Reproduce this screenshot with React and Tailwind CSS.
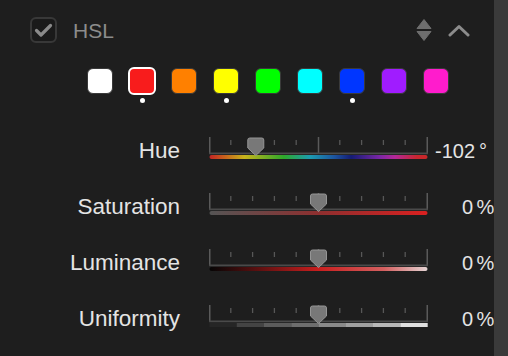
import React from "react";

const SWATCHES = [
  { c: "#ffffff", dot: false },
  { c: "#f81c1c", dot: true, sel: true },
  { c: "#ff8000", dot: false },
  { c: "#ffff00", dot: true },
  { c: "#00ff00", dot: false },
  { c: "#00ffff", dot: false },
  { c: "#0036ff", dot: true },
  { c: "#a01cff", dot: false },
  { c: "#ff1ccc", dot: false },
];

function Track({ id, stops, segments, pos }) {
  const W = 219;
  const small = [1, 2, 3, 4, 6, 7, 8, 9].map((i) => i * 21.8);
  const cx = 1 + pos * 217;
  return (
    <svg width={W} height="22" viewBox="0 0 219 22" className="block">
      {stops && (
        <defs>
          <linearGradient id={id} x1="0" x2="1" y1="0" y2="0">
            {stops.map(([o, c]) => (
              <stop key={o} offset={o} stopColor={c} />
            ))}
          </linearGradient>
        </defs>
      )}
      {small.map((x) => (
        <line key={x} x1={x} x2={x} y1="3" y2="8" stroke="#575757" strokeWidth="1.3" />
      ))}
      {[0.75, 109.5, 218.25].map((x) => (
        <line key={x} x1={x} x2={x} y1="0" y2="17" stroke="#5a5a5a" strokeWidth="1.5" />
      ))}
      <line x1="0" x2="219" y1="16.4" y2="16.4" stroke="#4a4a4a" strokeWidth="1.6" />
      {stops && <rect x="0.5" y="18" width="218" height="4" rx="2" fill={`url(#${id})`} />}
      {segments &&
        segments.map((c, i) => (
          <rect key={i} x={0.5 + (i * 218) / 8} y="18" width={218 / 8 + 0.2} height="4" fill={c} />
        ))}
      <path
        d={`M ${cx - 8} 3 Q ${cx - 8} 1 ${cx - 6} 1 L ${cx + 6} 1 Q ${cx + 8} 1 ${cx + 8} 3 L ${cx + 8} 11 L ${cx} 18.5 L ${cx - 8} 11 Z`}
        fill="#787878"
        stroke="#959595"
        strokeWidth="1"
      />
    </svg>
  );
}

const ROWS = [
  {
    label: "Hue",
    value: "-102",
    unit: "°",
    pos: 0.211,
    id: "hue",
    stops: [
      [0, "#c42424"],
      [0.07, "#c8621c"],
      [0.16, "#c8b41c"],
      [0.34, "#2ea82a"],
      [0.46, "#1c9cb0"],
      [0.57, "#1c56a0"],
      [0.65, "#141c74"],
      [0.78, "#7a26a6"],
      [0.85, "#b42898"],
      [0.95, "#c82630"],
      [1, "#c82828"],
    ],
  },
  {
    label: "Saturation",
    value: "0",
    unit: "%",
    pos: 0.5,
    id: "sat",
    stops: [
      [0, "#555555"],
      [0.5, "#8e2f2f"],
      [1, "#da2020"],
    ],
  },
  {
    label: "Luminance",
    value: "0",
    unit: "%",
    pos: 0.5,
    id: "lum",
    stops: [
      [0, "#050505"],
      [0.5, "#c81e1e"],
      [0.8, "#d46060"],
      [1, "#e4d4d4"],
    ],
  },
  {
    label: "Uniformity",
    value: "0",
    unit: "%",
    pos: 0.5,
    id: "uni",
    segments: ["#262626", "#444444", "#5c5c5c", "#6e6e6e", "#8a8a8a", "#a0a0a0", "#b8b8b8", "#e0e0e0"],
  },
];

export default function App() {
  return (
    <div
      className="w-[508px] h-[356px] bg-[#1e1e1e] flex overflow-hidden"
      style={{ fontFamily: '"Liberation Sans", Arial, sans-serif' }}
    >
      <div className="flex-1 min-w-0 overflow-hidden flex flex-col">
        {/* Header */}
        <div className="flex items-center h-[26px] mt-[17px] pl-[30px] pr-[24px]">
          <div className="w-[27px] h-[26px] rounded-[6px] border-2 border-[#383838] bg-[#1a1a1a] flex items-center justify-center">
            <svg width="19" height="15" viewBox="0 0 19 15">
              <path d="M2.5 7.5 L7 12 L16.5 2.5" fill="none" stroke="#8a8a8a" strokeWidth="3.2" strokeLinecap="round" strokeLinejoin="round" />
            </svg>
          </div>
          <span className="ml-[16px] text-[21px] leading-none text-[#8c8c8c]">HSL</span>
          <div className="ml-auto flex items-center">
            <svg width="16" height="23" viewBox="0 0 16 23">
              <path d="M8 0.5 L15 9.5 L1 9.5 Z" fill="#6e6e6e" strokeLinejoin="round" stroke="#6e6e6e" strokeWidth="1" />
              <path d="M1 12.5 L15 12.5 L8 21.5 Z" fill="#6e6e6e" strokeLinejoin="round" stroke="#6e6e6e" strokeWidth="1" />
            </svg>
            <svg width="22" height="13" viewBox="0 0 22 13" className="ml-[16px]">
              <path d="M2 11 L11 2.5 L20 11" fill="none" stroke="#8c8c8c" strokeWidth="3" strokeLinecap="round" strokeLinejoin="round" />
            </svg>
          </div>
        </div>

        {/* Swatches */}
        <div className="flex gap-[16px] pl-[87px] mt-[25px]">
          {SWATCHES.map((s, i) => (
            <div key={i} className="flex flex-col items-center w-[26px] shrink-0">
              <div
                className={
                  s.sel
                    ? "w-[28px] h-[28px] -m-[1px] rounded-[6px] border-2 border-white"
                    : "w-[26px] h-[26px] rounded-[6px] border-[1.5px] border-[#3a3a3a]"
                }
                style={{ backgroundColor: s.c }}
              />
              <div className={`mt-[4px] w-[5px] h-[5px] rounded-full ${s.dot ? "bg-white" : "bg-transparent"}`} />
            </div>
          ))}
        </div>

        {/* Slider rows */}
        <div className="mt-[20px] flex flex-col">
          {ROWS.map((r) => (
            <div key={r.label} className="h-[56px] flex items-center">
              <div className="w-[180px] shrink-0 text-right text-[22.5px] leading-none text-[#e4e4e4]">{r.label}</div>
              <div className="ml-[29px] shrink-0 self-start mt-[14px]">
                <Track id={r.id} stops={r.stops} segments={r.segments} pos={r.pos} />
              </div>
              <div
                className={`${r.unit === "%" ? "w-[45px]" : "w-[47px]"} shrink-0 text-right text-[20px] leading-none text-[#e4e4e4]`}
              >
                {r.value}
              </div>
              <div
                className={`${r.unit === "%" ? "ml-[3.5px]" : "ml-[4px]"} shrink-0 text-[20px] leading-none text-[#e4e4e4] whitespace-nowrap`}
              >
                {r.unit}
              </div>
            </div>
          ))}
        </div>
      </div>
      <div className="w-[14px] shrink-0 bg-[#3a3a3a]" />
    </div>
  );
}
